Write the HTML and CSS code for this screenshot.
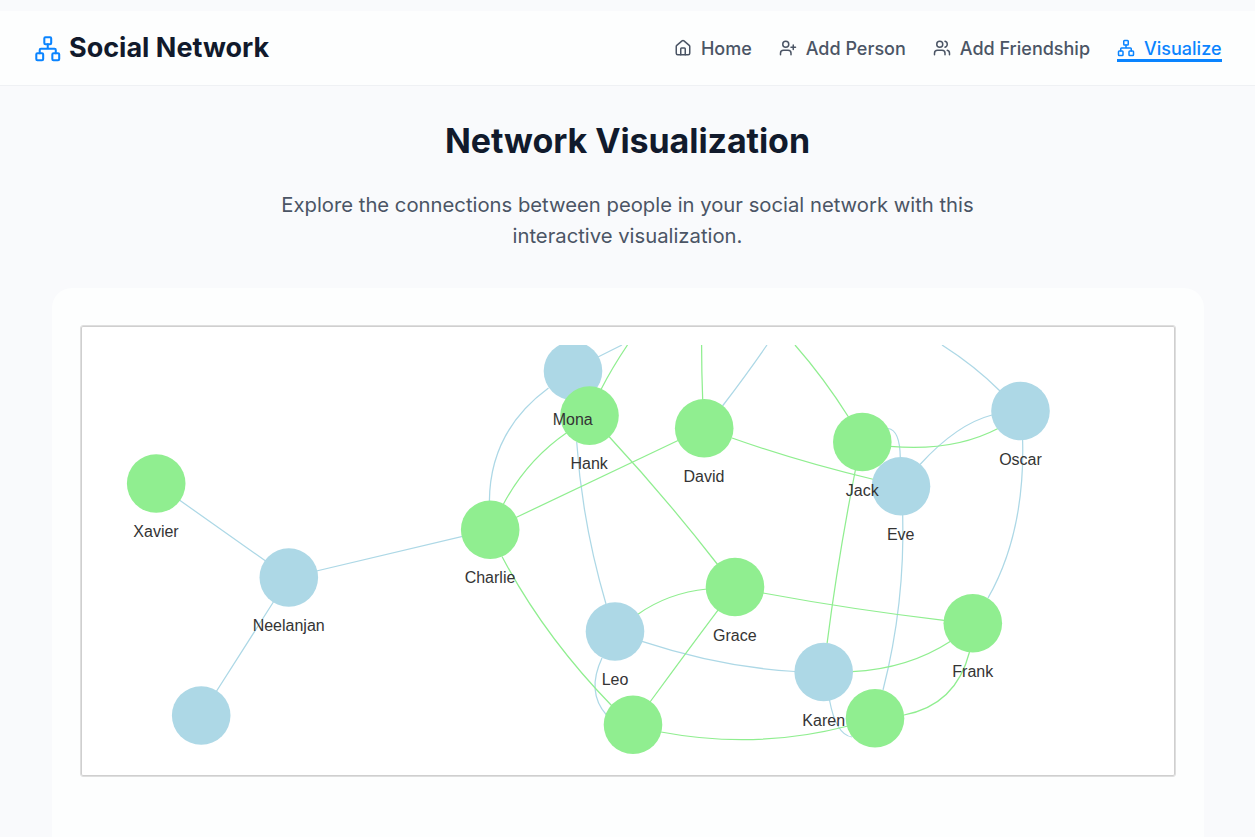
FILE: index.html
```html
<!DOCTYPE html>
<html lang="en">
<head>
<meta charset="utf-8">
<title>Social Network</title>
<link rel="stylesheet" href="styles.css">
</head>
<body>
<svg width="0" height="0" class="defs">
  <symbol id="net" viewBox="0 0 24 24"><rect x="16" y="16" width="6" height="6" rx="1"/><rect x="2" y="16" width="6" height="6" rx="1"/><rect x="9" y="2" width="6" height="6" rx="1"/><path d="M5 16v-3a1 1 0 0 1 1-1h12a1 1 0 0 1 1 1v3M12 12V8"/></symbol>
  <symbol id="home" viewBox="0 0 24 24"><path d="M15 21v-8a1 1 0 0 0-1-1h-4a1 1 0 0 0-1 1v8"/><path d="M3 10a2 2 0 0 1 .709-1.528l7-5.999a2 2 0 0 1 2.582 0l7 5.999A2 2 0 0 1 21 10v9a2 2 0 0 1-2 2H5a2 2 0 0 1-2-2z"/></symbol>
  <symbol id="plus" viewBox="0 0 24 24"><path d="M16 21v-2a4 4 0 0 0-4-4H6a4 4 0 0 0-4 4v2M19 8v6M22 11h-6"/><circle cx="9" cy="7" r="4"/></symbol>
  <symbol id="users" viewBox="0 0 24 24"><path d="M16 21v-2a4 4 0 0 0-4-4H6a4 4 0 0 0-4 4v2M22 21v-2a4 4 0 0 0-3-3.87M16 3.13a4 4 0 0 1 0 7.75"/><circle cx="9" cy="7" r="4"/></symbol>
</svg>
<header class="header">
  <div class="brand"><svg class="logo"><use href="#net"/></svg><span>Social Network</span></div>
  <nav class="nav">
    <a class="link"><svg class="icon"><use href="#home"/></svg><span class="text">Home</span></a>
    <a class="link"><svg class="icon"><use href="#plus"/></svg><span class="text">Add Person</span></a>
    <a class="link"><svg class="icon"><use href="#users"/></svg><span class="text">Add Friendship</span></a>
    <a class="link active"><svg class="icon"><use href="#net"/></svg><span class="text">Visualize</span></a>
  </nav>
</header>
<main class="main">
  <h1 class="title">Network Visualization</h1>
  <p class="lead">Explore the connections between people in your social network with this<br>interactive visualization.</p>
  <section class="card">
    <div class="frame">
      <svg class="graph" viewBox="82 345 1092 430">
        <g class="edge blue">
          <path d="M156 483.5L289 577.5L490 529.8M289 577.5L201 715.5"/>
          <path d="M489.4 501Q490 431 548.5 388"/>
          <path d="M598 357L622 345"/>
          <path d="M576.7 442Q582 522 606 604"/>
          <path d="M722.5 406Q747 374 767 345"/>
          <path d="M642 641.3Q720 667 795 671.5"/>
          <path d="M602 658Q586 692 606.5 715"/>
          <path d="M829.5 700Q836 735 852 737"/>
          <path d="M902.7 515Q905 604 883 690"/>
          <path d="M888 428.5Q900 430 900.3 458"/>
          <path d="M920 464.5Q957 424 992 415"/>
          <path d="M1022.6 440Q1025 533 988 598"/>
          <path d="M1000 391Q975 366 942 345"/>
        </g>
        <g class="edge green">
          <path d="M503.5 504Q527 460 567 432.5"/>
          <path d="M601 389.5Q612 368 627.5 345"/>
          <path d="M609 436.5Q666 498 718 565"/>
          <path d="M516 517.5L678 440.5"/>
          <path d="M702.7 400Q701.6 372 701.6 345"/>
          <path d="M732 438Q800 462 874 479.5"/>
          <path d="M502 556.5Q543.6 635.6 612 706"/>
          <path d="M638 614.2Q668 593 707 589"/>
          <path d="M718 610Q685 654 650 702"/>
          <path d="M763 593Q855 610 944 620.3"/>
          <path d="M661 732Q756 750 848 726"/>
          <path d="M852 671.6Q908 669 951 641"/>
          <path d="M969.5 652Q956 705 904 715"/>
          <path d="M855.4 470Q838 558 827 644"/>
          <path d="M890 446.3Q953 452 998 428.5"/>
          <path d="M848.5 417Q824 378 795 345"/>
        </g>
        <g class="node-blue">
          <circle cx="573" cy="371" r="29.3"/><circle cx="901" cy="486.3" r="29.3"/><circle cx="1020.5" cy="411" r="29.3"/>
          <circle cx="288.8" cy="577.5" r="29.3"/><circle cx="201.2" cy="715.5" r="29.3"/><circle cx="615" cy="631.5" r="29.3"/><circle cx="823.7" cy="672" r="29.3"/>
        </g>
        <g class="node-green">
          <circle cx="156.2" cy="483.5" r="29.3"/><circle cx="589.5" cy="415.6" r="29.3"/><circle cx="704.2" cy="428.3" r="29.3"/><circle cx="862.3" cy="442" r="29.3"/>
          <circle cx="490.2" cy="529.8" r="29.3"/><circle cx="735" cy="587" r="29.3"/><circle cx="972.8" cy="623.2" r="29.3"/><circle cx="633" cy="724.8" r="29.3"/><circle cx="875" cy="718.3" r="29.3"/>
        </g>
        <g class="label">
          <text x="572.7" y="425">Mona</text><text x="589.2" y="469">Hank</text><text x="704" y="482">David</text><text x="862.3" y="496">Jack</text>
          <text x="900.7" y="540">Eve</text><text x="1020.5" y="465">Oscar</text><text x="156" y="537">Xavier</text><text x="288.7" y="631">Neelanjan</text>
          <text x="490" y="583">Charlie</text><text x="734.8" y="641">Grace</text><text x="615" y="685">Leo</text><text x="823.7" y="726">Karen</text><text x="972.8" y="677">Frank</text>
        </g>
      </svg>
    </div>
  </section>
</main>
</body>
</html>
```
FILE: styles.css
```css
* { box-sizing: border-box; }
body {
  margin: 0;
  height: 837px;
  overflow: hidden;
  padding-top: 11px;
  display: flex;
  flex-direction: column;
  background: #f9fafc;
  color: #111a2c;
  font-family: Inter, sans-serif;
}
.defs { position: absolute; }
svg { fill: none; stroke: currentColor; stroke-width: 2; stroke-linecap: round; stroke-linejoin: round; }
.header {
  flex: none;
  height: 75px;
  padding: 0 33.5px;
  display: flex;
  justify-content: space-between;
  background: #fdfefe;
  border-bottom: 1px solid #eff1f4;
}
.brand { display: flex; align-items: center; gap: 8px; font-size: 27px; font-weight: 700; line-height: 72px; height: 73px; }
.logo { width: 27.5px; height: 27.5px; color: #0a84ff; margin-top: 3px; stroke-width: 1.8; }
.nav { display: flex; gap: 27px; align-items: flex-start; padding-top: 25px; }
.link { display: flex; align-items: center; gap: 9px; height: 26px; font-size: 18px; font-weight: 500; color: #4b5565; white-space: nowrap; border-bottom: 3px solid transparent; }
.text { padding-top: 2px; }
.icon { width: 18px; height: 18px; }
.active { color: #0a84ff; border-color: #0a84ff; }
.main { flex: 1; min-height: 0; display: flex; flex-direction: column; align-items: center; }
.title { margin: 33px 0 0; font-size: 34px; line-height: 44px; font-weight: 700; letter-spacing: -0.08px; }
.lead { margin: 26px 0 0; font-size: 20.25px; line-height: 31px; color: #4b5565; text-align: center; }
.card { flex: 1; min-height: 0; width: 1152px; margin-top: 37px; padding: 37px 28px 0; background: #fdfefe; border-radius: 20px 20px 0 0; }
.frame { width: 1096px; height: 452px; padding: 18px 0 0; background: #fff; border: 1px solid #dedede; border-radius: 3px; box-shadow: inset 0 0 0 1px #cfcfcf; }
.graph { display: block; width: 1092px; height: 430px; margin: 1px 1px 0; }
.edge { stroke-width: 1.25; stroke-linecap: butt; }
.blue { stroke: #add8e6; }
.green { stroke: #90ee90; }
.node-blue { fill: #add8e6; stroke: none; }
.node-green { fill: #90ee90; stroke: none; }
.label { font: 16px "Liberation Sans", Arial, sans-serif; fill: #343434; stroke: none; text-anchor: middle; }
```
